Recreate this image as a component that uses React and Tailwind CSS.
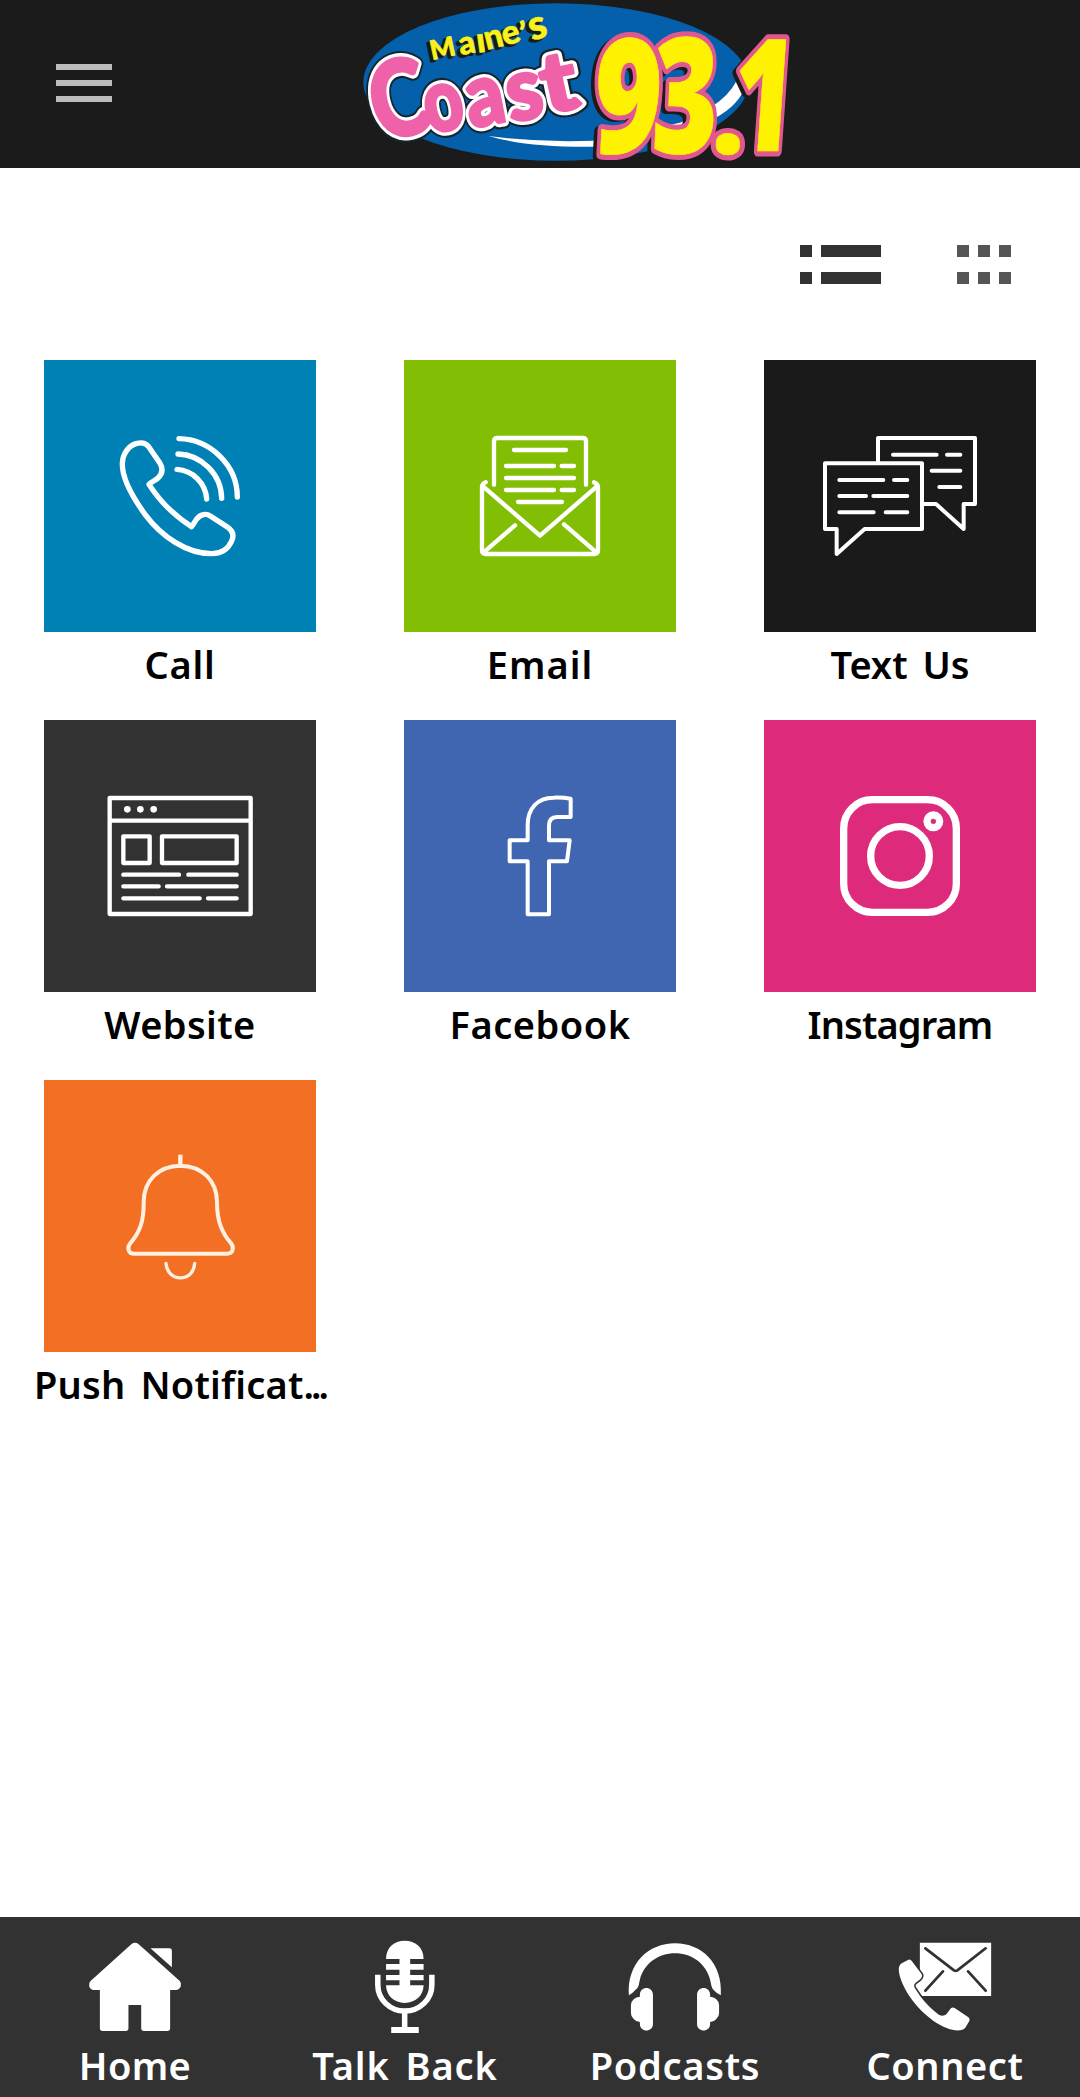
const FONT = "font-['Noto_Sans','Open_Sans',sans-serif]";

const coast = [
  { c: "C", t: "translate(120 426) rotate(-14) scale(0.82 1)", size: 316 },
  { c: "o", t: "translate(268 402) rotate(-12) scale(0.78 1)", size: 262 },
  { c: "a", t: "translate(392 384) rotate(-11) scale(0.86 1)", size: 262 },
  { c: "s", t: "translate(512 366) rotate(-10) scale(0.94 1)", size: 262 },
  { c: "t", t: "translate(620 342) rotate(-12) scale(1.14 1)", size: 250 },
];

const digits = [
  { c: "9", t: "translate(754 458) skewX(-3) scale(0.73 1)", size: 478 },
  { c: "3", t: "translate(932 459) skewX(-2) scale(0.7 1)", size: 482 },
  { c: ".", t: "translate(1114 462)", size: 345 },
  { c: "1", t: "translate(1170 452) skewX(-4) scale(0.67 1)", size: 468 },
];

const maines = [
  { c: "M", t: "translate(276 180) rotate(-12)", size: 80 },
  { c: "a", t: "translate(362 166) rotate(-12)", size: 96 },
  { c: "ı", t: "translate(413 158) rotate(-8)", size: 104 },
  { c: "n", t: "translate(440 150) rotate(-14)", size: 100 },
  { c: "e", t: "translate(494 138) rotate(-16)", size: 100 },
  { c: "’", t: "translate(540 130) rotate(-4)", size: 88 },
  { c: "s", t: "translate(576 122) rotate(-16)", size: 122 },
];

const Letters = ({ id, items }) => (
  <g id={id} strokeLinejoin="round">
    {items.map(({ c, t, size }) => (
      <text key={c} transform={t} fontSize={size}>
        {c}
      </text>
    ))}
  </g>
);

const Logo = () => (
  <svg
    viewBox="0 0 1410 504"
    className="w-[470px] h-[168px] font-['Lato',sans-serif] font-black"
  >
    <ellipse cx="648" cy="246" rx="578" ry="236" fill="#0560ab" />
    <path
      d="M445 408 Q600 428 758 422 L1020 368 Q1170 310 1198 222 L1222 236 Q1212 300 1140 346 Q1000 432 758 440 Q560 442 445 408Z"
      fill="#fff"
    />
    <use href="#maines" x="-8" y="7" fill="#181a1c" stroke="#181a1c" strokeWidth="6" />
    <g fill="#f8f21a" stroke="#f8f21a" strokeWidth="2">
      <Letters id="maines" items={maines} />
    </g>
    <use href="#coast" fill="#17242f" stroke="#17242f" strokeWidth="42" />
    <use href="#coast" fill="#fff" stroke="#fff" strokeWidth="29" />
    <g fill="#ef62a9" stroke="#ef62a9" strokeWidth="9">
      <Letters id="coast" items={coast} />
    </g>
    <g className="font-['Open_Sans',sans-serif] font-extrabold">
      <use href="#digits" x="-12" y="8" fill="#1b1b1b" stroke="#1b1b1b" strokeWidth="30" />
      <use href="#digits" fill="#e0588f" stroke="#e0588f" strokeWidth="33" />
      <g fill="#fff200" stroke="#fff200" strokeWidth="2">
        <Letters id="digits" items={digits} />
      </g>
    </g>
  </svg>
);

const Tile = ({ viewBox = "42 30 816 816", width = 12, children }) => (
  <svg
    viewBox={viewBox}
    className="size-full"
    fill="none"
    stroke="#fff"
    strokeWidth={width}
    strokeLinecap="round"
    strokeLinejoin="round"
  >
    {children}
  </svg>
);

const CallIcon = () => (
  <Tile width={16}>
    <path d="M356 290 L389 338 C400 356 397 372 384 384 C377 391 366 394 357 403 C390 455 435 498 485 530 C490 524 494 515 500 507 C511 493 528 489 541 498 L592 531 C608 542 613 556 605 573 C595 596 575 611 545 611 C470 611 395 560 345 493 C305 438 276 385 277 340 C278 312 295 288 318 281 C334 276 347 278 356 290Z" />
    <path d="M447 266 C540 268 622 345 622 441 M444 312 C514 314 574 373 575 445 M441 358 C488 361 527 399 530 447" />
  </Tile>
);

const EmailIcon = () => (
  <Tile width={13}>
    <path d="M312 404 V274 Q312 264 322 264 H578 Q588 264 588 274 V404" />
    <path d="M287 397 Q276 401 276 412 V600 Q276 612 288 612 H612 Q624 612 624 600 V412 Q624 401 612 397" />
    <path d="M279 409 L450 557 L621 409 M281 607 L375 526 M619 607 L522 523" />
    <path d="M372 300 H528 M348 348 H492 M515 348 H552 M348 384 H552 M348 420 H492 M515 420 H552 M384 456 H516" />
  </Tile>
);

const TextIcon = () => (
  <Tile>
    <path d="M225 340 H516 V537 H344 L260 612 V537 H225Z" />
    <path d="M384 336 V264 H675 V462 H641 V537 L558 462 H520" />
    <path d="M268 390 H400 M432 390 H472 M268 438 H348 M370 438 H472 M268 487 H371 M407 487 H472 M429 314 H560 M591 314 H631 M545 362 H631 M568 411 H631" />
  </Tile>
);

const WebsiteIcon = () => (
  <Tile width={13}>
    <path d="M239 264 H662 V612 H239Z M239 332 H662" />
    <path d="M280 379 H359 V459 H280Z M396 379 H620 V459 H396Z" />
    <path d="M280 494 H447 M475 494 H620 M280 529 H386 M411 529 H620 M280 565 H509 M534 565 H620" />
    <g fill="#fff" stroke="none">
      <circle cx="292" cy="298" r="10" />
      <circle cx="331" cy="298" r="10" />
      <circle cx="371" cy="298" r="10" />
    </g>
  </Tile>
);

const FacebookIcon = () => (
  <Tile>
    <path d="M413 613 V454 H359 V391 H413 V345 C413 295 443 263 490 263 Q518 262 542 266 V321 H501 C485 321 477 330 477 347 V391 H539 L531 454 H477 V613Z" />
  </Tile>
);

const InstagramIcon = () => (
  <Tile width={22}>
    <rect x="281" y="269" width="338" height="338" rx="86" />
    <circle cx="450" cy="438" r="88" />
    <circle cx="550" cy="334" r="19" />
  </Tile>
);

const BellIcon = () => (
  <Tile viewBox="72 30 816 816">
    <g stroke="#fff0e0">
      <path d="M481 287 C415 288 372 332 371 395 C372 450 361 485 330 521 C320 535 326 551 342 551 H622 C638 551 643 535 634 521 C603 485 591 450 591 395 C590 332 547 288 481 287Z" />
      <path d="M481 254 V284" strokeLinecap="butt" strokeWidth="13" />
      <path d="M438 580 C442 638 521 638 524 580" strokeWidth="10" />
    </g>
  </Tile>
);

const NavIcon = ({ viewBox, children }) => (
  <svg
    viewBox={viewBox}
    preserveAspectRatio="none"
    className="w-[270px] h-[122px]"
    fill="#fff"
  >
    {children}
  </svg>
);

const HomeIcon = () => (
  <NavIcon viewBox="0 51 784 366">
    <path d="M382 132 Q392 124 402 132 L522 243 Q528 250 525 259 Q521 270 510 270 H494 V385 Q494 393 486 393 H418 Q410 393 410 385 V315 H373 V385 Q373 393 365 393 H298 Q290 393 290 385 V270 H273 Q262 270 259 259 Q257 249 263 243Z" />
    <path d="M437 145 H492 Q499 145 499 152 V202Z" />
  </NavIcon>
);

const MicIcon = () => (
  <NavIcon viewBox="784 51 784 366">
    <path d="M1121 177 C1121 141 1145 122 1175 122 C1206 122 1230 141 1230 177 H1191 V192 H1230 V209 H1191 V225 H1230 V241 H1191 V256 H1230 C1230 287 1206 309 1175 309 C1145 309 1121 287 1121 256 H1160 V241 H1121 V225 H1160 V209 H1121 V192 H1160 V177Z" />
    <path
      d="M1097 224 V254 C1097 298 1132 333 1175 333 C1219 333 1254 298 1254 254 V224"
      fill="none"
      stroke="#fff"
      strokeWidth="16"
    />
    <path d="M1167 335 H1183 V381 H1216 V399 H1136 V381 H1167Z" />
  </NavIcon>
);

const HeadphonesIcon = () => (
  <NavIcon viewBox="0 51 784 366">
    <path d="M258 286 C252 190 315 130 392 130 C470 130 531 190 525 286 Q515 282 504 270 C497 262 497 251 494 239 C481 190 440 160 392 160 C344 160 303 190 290 239 C287 251 288 260 279 268 Q269 280 258 286Z" />
    <path d="M290 285 C290 257 328 257 328 285 V372 C328 398 290 398 290 372 V366 Q279 366 272 357 Q264 350 264 340 V316 Q264 305 272 298 Q279 291 290 290Z" />
    <path d="M494 285 C494 257 456 257 456 285 V372 C456 398 494 398 494 372 V366 Q505 366 512 357 Q520 350 520 340 V316 Q520 305 512 298 Q505 291 494 290Z" />
  </NavIcon>
);

const ConnectIcon = () => (
  <NavIcon viewBox="784 51 784 366">
    <path d="M1103 128 H1310 V288 H1108 L1084 256 L1103 235Z" />
    <path
      d="M1042 203 Q1042 196 1050 190 L1070 179 Q1076 177 1080 184 L1108 222 Q1112 230 1104 238 L1090 249 Q1084 254 1087 262 C1108 298 1132 324 1158 344 Q1170 351 1180 343 L1193 325 Q1198 320 1204 324 L1244 352 Q1249 356 1247 362 L1235 383 Q1230 390 1220 391 C1175 395 1115 350 1077 295 C1050 255 1040 220 1042 203Z"
      stroke="#323232"
      strokeWidth="9"
      paintOrder="stroke"
    />
    <path
      d="M1119 145 L1202 211 Q1207 214 1212 211 L1294 145 M1119 272 L1170 214 M1294 272 L1243 214"
      fill="none"
      stroke="#323232"
      strokeWidth="8"
      strokeLinecap="round"
    />
  </NavIcon>
);

const links = [
  { label: "Call", bg: "bg-[#0081b5]", Icon: CallIcon, text: "tracking-[0.7px]" },
  { label: "Email", bg: "bg-[#82be04]", Icon: EmailIcon, text: "tracking-[1px]" },
  {
    label: "Text Us",
    bg: "bg-[#1a1a1a]",
    Icon: TextIcon,
    text: "[word-spacing:5px]",
  },
  { label: "Website", bg: "bg-[#323232]", Icon: WebsiteIcon, text: "tracking-[0.4px]" },
  { label: "Facebook", bg: "bg-[#4166b1]", Icon: FacebookIcon, text: "tracking-[0.5px]" },
  {
    label: "Instagram",
    bg: "bg-[#de2a7b]",
    Icon: InstagramIcon,
    text: "tracking-[-0.9px]",
  },
  {
    label: "Push Notificat",
    more: true,
    bg: "bg-[#f26f24]",
    Icon: BellIcon,
    text: "tracking-[0.2px] [word-spacing:5px]",
  },
];

const nav = [
  { label: "Home", Icon: HomeIcon, text: "tracking-[0.4px]" },
  { label: "Talk Back", Icon: MicIcon, text: "tracking-[0.9px] [word-spacing:5px]" },
  { label: "Podcasts", Icon: HeadphonesIcon, text: "tracking-[0.7px]" },
  { label: "Connect", Icon: ConnectIcon, text: "tracking-[0.6px]" },
];

const Header = () => (
  <header className="h-[168px] bg-[#1b1b1b] flex items-center shrink-0">
    <button className="ml-14 mr-[228px] mb-0.5 w-14 flex flex-col gap-2.5 *:h-1.5 *:bg-[#bdbdbd]">
      <span></span>
      <span></span>
      <span></span>
    </button>
    <Logo />
  </header>
);

const ViewToggle = () => (
  <div className="flex justify-end gap-[76px] pt-[77px] pr-[69px]">
    <div className="grid grid-cols-[12px_60px] gap-x-[9px] gap-y-[15px] *:h-3 *:bg-[#323232]">
      <span></span>
      <span></span>
      <span></span>
      <span></span>
    </div>
    <div className="grid grid-cols-[12px_12px_12px] gap-x-[9px] gap-y-[15px] *:h-3 *:bg-[#555]">
      <span></span>
      <span></span>
      <span></span>
      <span></span>
      <span></span>
      <span></span>
    </div>
  </div>
);

export default function App() {
  return (
    <div className={`w-[1080px] h-[2097px] bg-white flex flex-col overflow-hidden ${FONT}`}>
      <Header />
      <main className="grow">
        <ViewToggle />
        <div className="grid grid-cols-3 pt-[76px]">
          {links.map(({ label, more, bg, Icon, text }) => (
            <div key={label} className="h-[360px] flex flex-col items-center">
              <div className={`size-[272px] ${bg}`}>
                <Icon />
              </div>
              <span
                className={`pt-[7px] text-[38px] leading-[50px] font-semibold text-black whitespace-nowrap ${text}`}
              >
                {label}
                {more && <span className="tracking-[-3px]">...</span>}
              </span>
            </div>
          ))}
        </div>
      </main>
      <footer className="h-[180px] bg-[#323232] grid grid-cols-4 shrink-0">
        {nav.map(({ label, Icon, text }) => (
          <div key={label} className="flex flex-col items-center">
            <Icon />
            <span
              className={`pt-px text-[38px] leading-[50px] font-semibold text-white whitespace-nowrap ${text}`}
            >
              {label}
            </span>
          </div>
        ))}
      </footer>
    </div>
  );
}
